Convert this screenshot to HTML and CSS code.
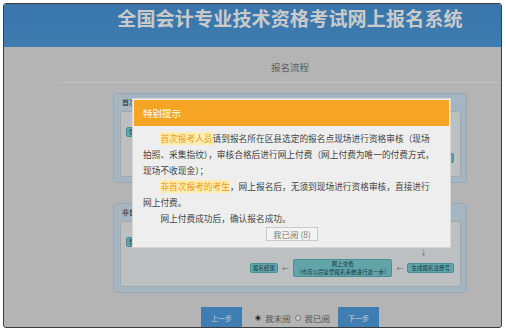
FILE: index.html
```html
<!DOCTYPE html>
<html lang="zh-CN">
<head>
  <meta charset="UTF-8" />
  <meta name="viewport" content="width=device-width, initial-scale=1.0"/>
  <title>全国会计专业技术资格考试网上报名系统</title>
  <link rel="stylesheet" href="styles.css">
</head>
<body>

<div class="window">

  <div class="page">
    <header class="top">
      <h1>全国会计专业技术资格考试网上报名系统</h1>
    </header>

    <div class="main-title">报名流程</div>

    <!-- 首次报考 -->
    <div class="flow">
      <div class="flow-head">首次报考人员</div>
      <div class="flow-body">
        <div class="flow-row">
          <span class="step">登录报名系统</span><span class="arr">→</span>
          <span class="step">填写报名信息</span><span class="arr">→</span>
          <span class="step">上传照片</span><span class="arr">→</span>
          <span class="step">选择报名点</span>
        </div>
        <div class="flow-down">↓</div>
        <div class="flow-row back">
          <span class="step">报名结果</span><span class="arr">←</span>
          <span class="step">网上交费</span><span class="arr">←</span>
          <span class="step">现场资格审核</span>
        </div>
      </div>
    </div>

    <!-- 非首次报考 -->
    <div class="flow">
      <div class="flow-head">非首次报考人员</div>
      <div class="flow-body">
        <div class="flow-row">
          <span class="step">登录报名系统</span><span class="arr">→</span>
          <span class="step">填写报名信息</span><span class="arr">→</span>
          <span class="step">确认报名信息</span>
        </div>
        <div class="flow-down">↓</div>
        <div class="flow-row back">
          <span class="step">报名结果</span><span class="arr">←</span>
          <span class="step">网上交费<br>（也可以后复登报名系统进行这一步）</span><span class="arr">←</span>
          <span class="step wide">生成报名注册号</span>
        </div>
      </div>
    </div>

    <div class="actions">
      <button class="btn">上一步</button>
      <label class="choice first"><span class="dot on"></span>我未阅</label>
      <label class="choice"><span class="dot"></span>我已阅</label>
      <button class="btn next">下一步</button>
    </div>
  </div>

  <div class="mask"></div>

  <!-- 弹窗 -->
  <div class="dialog">
    <div class="dialog-head">特别提示</div>
    <div class="dialog-body">
      <p><em>首次报考人员</em>请到报名所在区县选定的报名点现场进行资格审核（现场<br>拍照、采集指纹），审核合格后进行网上付费（网上付费为唯一的付费方式，<br>现场不收现金）；</p>
      <p><em>非首次报考的考生</em>，网上报名后，无须到现场进行资格审核，直接进行<br>网上付费。</p>
      <p>网上付费成功后，确认报名成功。</p>
      <button class="read-btn">我已阅 (8)</button>
    </div>
  </div>

</div>

</body>
</html>
```

FILE: styles.css
```css
* {
  box-sizing: border-box;
}

body {
  margin: 0;
  background: #fff;
  font-family: "Noto Sans CJK SC", "Liberation Sans", sans-serif;
}

.window {
  position: relative;
  width: 499px;
  height: 325px;
  margin: 3px;
  border: 1px solid #3c3c3c;
  border-radius: 3px;
  overflow: hidden;
  background: #e2e2e2;
}

.page {
  width: 572px;
}

.top {
  height: 43px;
  background: linear-gradient(#4794d6, #4f9cdd);
}

.top h1 {
  margin: 0;
  padding-top: 3px;
  font-size: 19px;
  line-height: 22px;
  letter-spacing: 0.2px;
  font-weight: bold;
  color: #fdfdfd;
  text-align: center;
}

.main-title {
  margin: 0 56px;
  height: 36px;
  padding-top: 13px;
  line-height: 14px;
  font-size: 9.5px;
  color: #777;
  text-align: center;
  border-bottom: 1px solid #f2f2f2;
}

.flow {
  width: 354px;
  margin: 10px auto 0;
  background: #cfe3f2;
  border: 1px solid #bcd3e4;
  border-radius: 4px;
  padding: 0 5px 5px 6px;
}

.flow + .flow {
  margin-top: 20px;
}

.flow-head {
  height: 17px;
  line-height: 17px;
  padding-left: 2px;
  font-size: 7px;
  color: #333;
}

.flow-body {
  height: 66px;
  padding: 15px 6px 0 5px;
  background: #edf0f2;
  border: 1px solid #c6d2da;
  border-radius: 3px;
}

.flow-row {
  display: flex;
  align-items: center;
  gap: 4px;
  height: 10px;
}

.flow-row.back {
  justify-content: flex-end;
  height: 20px;
}

.flow-down {
  height: 11px;
  padding-right: 27px;
  text-align: right;
  font-size: 7px;
  line-height: 11px;
  color: #8a8a8a;
}

.step {
  padding: 0 2px;
  background: #7bcfd4;
  border: 1px solid #5cb4ba;
  border-radius: 2px;
  font-size: 5.5px;
  line-height: 8px;
  color: #1f3f55;
  text-align: center;
  white-space: nowrap;
}

.step.wide {
  padding: 0 3px;
}

.arr {
  font-size: 7px;
  color: #888;
}

.actions {
  display: flex;
  justify-content: center;
  align-items: center;
  margin-top: 14px;
}

.btn {
  width: 41px;
  height: 22px;
  padding: 0;
  border: 0;
  background: #4e9ee0;
  color: #fff;
  font-family: inherit;
  font-size: 7px;
}

.choice {
  display: flex;
  align-items: center;
  gap: 4px;
  margin-left: 4px;
  font-size: 8.5px;
  color: #666;
}

.choice.first {
  margin-left: 13px;
}

.btn.next {
  margin-left: 8px;
}

.dot {
  width: 6px;
  height: 6px;
  border: 1px solid #999;
  border-radius: 50%;
  background: #fff;
}

.dot.on {
  background: radial-gradient(circle, #333 0 1.5px, #fff 2px);
}

.mask {
  position: absolute;
  top: 0;
  left: 0;
  right: 0;
  bottom: 0;
  background: rgba(0, 0, 0, 0.2);
}

.dialog {
  position: absolute;
  left: 128px;
  top: 94px;
  width: 319px;
  padding: 1px;
  background: #eeeeee;
  border: 1px solid #d6d6d6;
}

.dialog-head {
  height: 26px;
  line-height: 26px;
  padding-left: 9px;
  background: #f6a424;
  color: #fff;
  font-size: 9.5px;
}

.dialog-body {
  padding: 5px 8px 5px 9px;
  font-size: 8.7px;
  line-height: 16px;
  color: #444;
}

.dialog-body p {
  margin: 0;
  text-indent: 2em;
}

.dialog-body em {
  font-style: normal;
  color: #f29a16;
  background: #fdedb2;
}

.read-btn {
  display: block;
  width: 52px;
  height: 14px;
  margin: 0 auto;
  padding: 0;
  background: #f4f4f4;
  border: 1px solid #c9c9c9;
  font-family: inherit;
  font-size: 8.5px;
  line-height: 12px;
  color: #777;
}
```
